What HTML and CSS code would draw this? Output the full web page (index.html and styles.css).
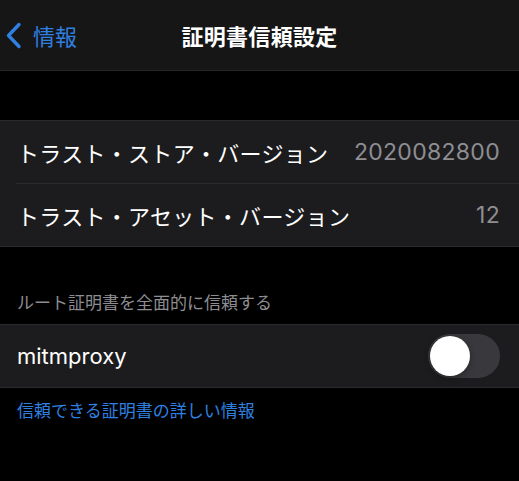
FILE: index.html
```html
<!DOCTYPE html>
<html lang="ja">
<head>
<meta charset="utf-8">
<link rel="stylesheet" href="styles.css">
</head>
<body>
<div class="screen">
  <header class="nav">
    <a class="back">
      <svg class="chev" width="17" height="27" viewBox="0 0 17 27"><path d="M14 2.5 L3.5 13.5 L14 24.5" fill="none" stroke="#2f80e0" stroke-width="3.4" stroke-linecap="round" stroke-linejoin="round"/></svg>
      <span>情報</span>
    </a>
    <h1 class="title">証明書信頼設定</h1>
  </header>

  <section class="group first">
    <div class="row">
      <span class="label">トラスト・ストア・バージョン</span>
      <span class="value">2020082800</span>
    </div>
    <div class="row">
      <span class="label">トラスト・アセット・バージョン</span>
      <span class="value">12</span>
    </div>
  </section>

  <div class="section-header">ルート証明書を全面的に信頼する</div>
  <section class="group">
    <div class="row">
      <span class="label latin">mitmproxy</span>
      <span class="toggle"><span class="knob"></span></span>
    </div>
  </section>
  <div class="footer-link">信頼できる証明書の詳しい情報</div>
</div>
</body>
</html>
```

FILE: styles.css
```css
html, body {
  margin: 0;
  padding: 0;
  background: #000;
}
.screen {
  width: 519px;
  min-height: 481px;
  background: #000;
  font-family: "Noto Sans CJK JP", "Inter", sans-serif;
  color: #fff;
}
.nav {
  position: relative;
  height: 70px;
  background: #161616;
  border-bottom: 1px solid #262628;
  display: flex;
  align-items: center;
  justify-content: center;
}
.back {
  position: absolute;
  left: 5px;
  top: 0;
  height: 70px;
  display: flex;
  align-items: center;
  gap: 11px;
  color: #2f80e0;
  font-size: 22px;
}
.chev { display: block; margin-top: 1px; }
.title {
  margin: 0;
  font-size: 22px;
  font-weight: 700;
  letter-spacing: 0.3px;
}
.group {
  background: #1c1c1e;
  border-top: 1px solid #2a2a2c;
  border-bottom: 1px solid #2a2a2c;
}
.group.first { margin-top: 49px; }
.row {
  height: 62px;
  display: flex;
  align-items: center;
  justify-content: space-between;
  padding: 0 19px 0 17px;
  position: relative;
}
.row + .row { border-top: 1px solid #2c2c2e; margin-left: 16px; padding-left: 1px; }
.label {
  font-size: 22px;
  color: #fff;
  letter-spacing: 0.3px;
}
.label.latin { font-family: "Inter", "Noto Sans", sans-serif; font-size: 22px; letter-spacing: 0; }
.value {
  font-family: "Inter", "Noto Sans", sans-serif;
  font-size: 23px;
  letter-spacing: 0.3px;
  color: #8e8e93;
}
.section-header {
  margin-top: 42px;
  padding: 0 17px 9px;
  font-size: 17px;
  color: #8d8d92;
  line-height: 26px;
}
.toggle {
  width: 72px;
  height: 44px;
  border-radius: 22px;
  background: #39393d;
  display: flex;
  align-items: center;
  padding-left: 2px;
  box-sizing: border-box;
}
.knob {
  width: 40px;
  height: 40px;
  border-radius: 50%;
  background: #fff;
  box-shadow: 0 2px 6px rgba(0,0,0,0.35);
}
.footer-link {
  padding: 9px 17px 0;
  font-size: 17px;
  color: #2f80e0;
  line-height: 26px;
}
```
